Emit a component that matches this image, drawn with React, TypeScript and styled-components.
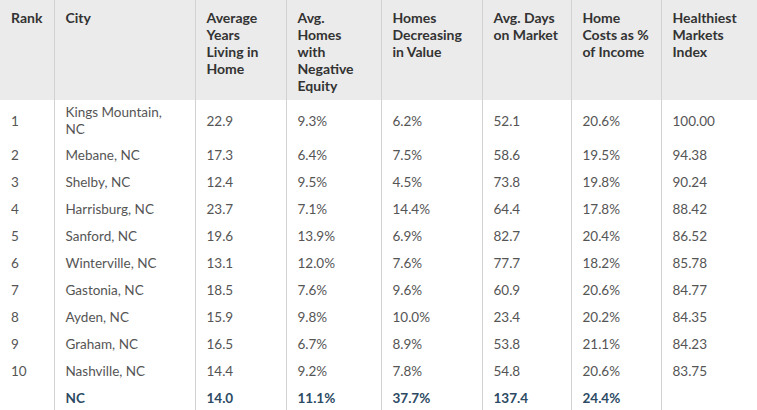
import styled, { createGlobalStyle } from 'styled-components';

const GlobalStyle = createGlobalStyle`
  html, body {
    margin: 0;
    padding: 0;
    background: #ffffff;
  }
`;

const Table = styled.table`
  width: 757px;
  table-layout: fixed;
  border-collapse: collapse;
  font-family: 'Lato', 'Liberation Sans', sans-serif;
  font-size: 13.5px;
  line-height: 17px;
`;

const HeadCell = styled.th`
  background: #ebebeb;
  color: #333333;
  font-size: 14px;
  font-weight: 700;
  text-align: left;
  vertical-align: top;
  white-space: nowrap;
  padding: 9px 6px 6px 11px;
  height: 85px;
  border-left: 1px solid #d2d2d2;

  &:first-child {
    border-left: none;
  }
`;

const Row = styled.tr`
  height: 27px;
`;

const Cell = styled.td<{ $total?: boolean; $wide?: boolean }>`
  color: ${p => (p.$total ? '#2c4a63' : '#555555')};
  font-weight: ${p => (p.$total ? 700 : 400)};
  vertical-align: middle;
  padding: 4px ${p => (p.$wide ? 24 : 10)}px 4px 11px;
  border-left: 1px solid #d2d2d2;

  &:first-child {
    border-left: none;
  }
`;

const columns = [
  { width: 54, label: ['Rank'] },
  { width: 141, label: ['City'] },
  { width: 91, label: ['Average', 'Years', 'Living in', 'Home'] },
  { width: 95, label: ['Avg.', 'Homes', 'with', 'Negative', 'Equity'] },
  { width: 101, label: ['Homes', 'Decreasing', 'in Value'] },
  { width: 89, label: ['Avg. Days', 'on Market'] },
  { width: 90, label: ['Home', 'Costs as %', 'of Income'] },
  { width: 96, label: ['Healthiest', 'Markets', 'Index'] },
];

const rows = [
  ['1', 'Kings Mountain, NC', '22.9', '9.3%', '6.2%', '52.1', '20.6%', '100.00'],
  ['2', 'Mebane, NC', '17.3', '6.4%', '7.5%', '58.6', '19.5%', '94.38'],
  ['3', 'Shelby, NC', '12.4', '9.5%', '4.5%', '73.8', '19.8%', '90.24'],
  ['4', 'Harrisburg, NC', '23.7', '7.1%', '14.4%', '64.4', '17.8%', '88.42'],
  ['5', 'Sanford, NC', '19.6', '13.9%', '6.9%', '82.7', '20.4%', '86.52'],
  ['6', 'Winterville, NC', '13.1', '12.0%', '7.6%', '77.7', '18.2%', '85.78'],
  ['7', 'Gastonia, NC', '18.5', '7.6%', '9.6%', '60.9', '20.6%', '84.77'],
  ['8', 'Ayden, NC', '15.9', '9.8%', '10.0%', '23.4', '20.2%', '84.35'],
  ['9', 'Graham, NC', '16.5', '6.7%', '8.9%', '53.8', '21.1%', '84.23'],
  ['10', 'Nashville, NC', '14.4', '9.2%', '7.8%', '54.8', '20.6%', '83.75'],
];

const total = ['', 'NC', '14.0', '11.1%', '37.7%', '137.4', '24.4%', ''];

const App = () => (
  <>
    <GlobalStyle />
    <Table>
      <colgroup>
        {columns.map((c, i) => (
          <col key={i} style={{ width: c.width }} />
        ))}
      </colgroup>
      <thead>
        <tr>
          {columns.map((c, i) => (
            <HeadCell key={i}>
              {c.label.map((line, j) => (
                <span key={j}>
                  {j > 0 && <br />}
                  {line}
                </span>
              ))}
            </HeadCell>
          ))}
        </tr>
      </thead>
      <tbody>
        {rows.map((r, i) => (
          <Row key={i}>
            {r.map((v, j) => (
              <Cell key={j} $wide={j === 1}>{v}</Cell>
            ))}
          </Row>
        ))}
        <Row>
          {total.map((v, j) => (
            <Cell key={j} $total $wide={j === 1}>
              {v}
            </Cell>
          ))}
        </Row>
      </tbody>
    </Table>
  </>
);

export default App;
